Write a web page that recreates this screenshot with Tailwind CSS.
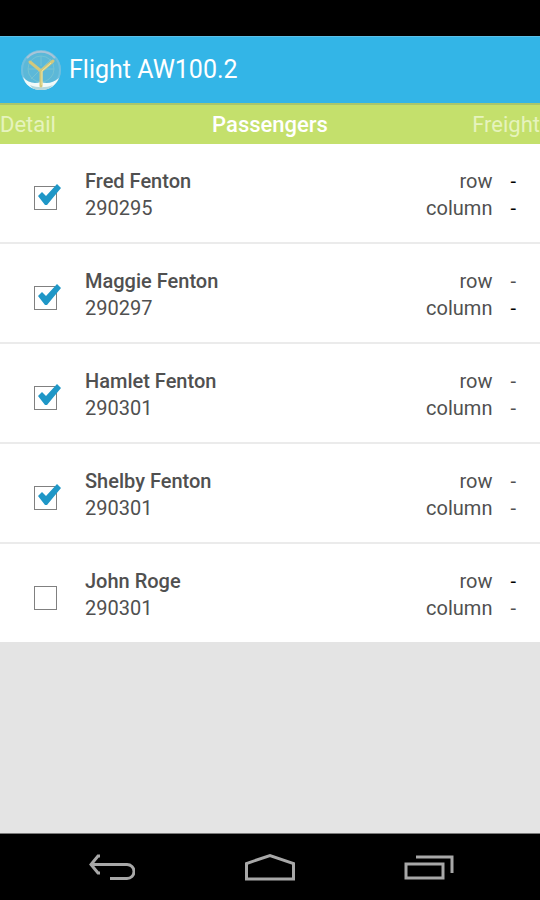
<!DOCTYPE html>
<html lang="en">
<head>
  <meta charset="UTF-8">
  <title>Flight AW100.2</title>
  <meta name="viewport" content="width=device-width, initial-scale=1">
  <script src="https://cdn.jsdelivr.net/npm/@tailwindcss/browser@4"></script>
</head>
<body class="min-h-screen flex flex-col bg-[#e4e4e4] font-['Roboto',sans-serif] text-[#505050]">

  <!-- Status bar -->
  <div class="h-9 bg-black"></div>

  <!-- Action bar -->
  <header class="h-[67px] flex items-center gap-2 px-[21px] bg-[#33b5e7] border-t border-[#5bc0e8]">
    <svg class="w-10 h-11" viewBox="0 0 40 44" fill="none">
      <circle cx="20" cy="22" r="20" fill="#5cb8d8"/>
      <circle cx="20" cy="22" r="19" stroke="#6fbfdf" stroke-width="2"/>
      <path d="M6 10a19 19 0 0 1 28 0" stroke="#a9c4d8" stroke-width="2"/>
      <circle cx="20" cy="21" r="13" stroke="#74c3d4" stroke-width="1"/>
      <path d="M10 31 30 11M20 8v10M7 21h26" stroke="#74c3d4" stroke-width="1"/>
      <path d="M2 29c5 6 11 7 18 5 6 2 12 1 18-4-3 7-9 12-18 12S4 37 2 29z" fill="#f2fafa"/>
      <path d="M9 37c7 3 16 3 23 0-3 4-7 5-12 5s-9-1-11-5z" fill="#b5d8dc"/>
      <path d="M20 38V23L9 14M20 23l12-10" stroke="#d2c87c" stroke-width="3" stroke-linecap="round"/>
      <path d="M21 37V23l9-8" stroke="#efe6a0" stroke-width="1"/>
    </svg>
    <h1 class="text-[25px] leading-8 text-white">Flight AW100.2</h1>
  </header>

  <!-- Tabs -->
  <nav class="h-[41px] grid grid-cols-3 items-center pt-px bg-[#c4e06c] border-t-2 border-[#a9c66c] text-[22px] leading-7">
    <a href="#" class="text-[#e6f3bd]">Detail</a>
    <a href="#" class="text-center font-medium text-white">Passengers</a>
    <a href="#" class="text-right text-[#e6f3bd]">Freight</a>
  </nav>

  <main class="flex-1">
    <ul class="bg-white divide-y-2 divide-[#ebebeb] text-xl leading-[27px]">
      <li class="flex pt-6 pb-5 pl-[34px] pr-6">
        <div class="relative w-6 h-6 mt-[18px] mr-[27px]">
          <input type="checkbox" id="p1" checked class="peer block appearance-none w-[23px] h-6 border border-[#808080]">
          <svg class="absolute -top-1 left-0 hidden peer-checked:block pointer-events-none" width="30" height="26" viewBox="0 0 30 26"><path d="M4 14l4-4 4 4L23 2l4 4-14 17h-2z" fill="#1f97c7"/></svg>
        </div>
        <label for="p1" class="flex-1"><span class="block font-medium">Fred Fenton</span><span class="block">290295</span></label>
        <dl class="grid grid-cols-[auto_auto] gap-x-[18px] text-right">
          <dt>row</dt><dd class="text-black">-</dd>
          <dt>column</dt><dd class="text-black">-</dd>
        </dl>
      </li>
      <li class="flex pt-6 pb-5 pl-[34px] pr-6">
        <div class="relative w-6 h-6 mt-[18px] mr-[27px]">
          <input type="checkbox" id="p2" checked class="peer block appearance-none w-[23px] h-6 border border-[#808080]">
          <svg class="absolute -top-1 left-0 hidden peer-checked:block pointer-events-none" width="30" height="26" viewBox="0 0 30 26"><path d="M4 14l4-4 4 4L23 2l4 4-14 17h-2z" fill="#1f97c7"/></svg>
        </div>
        <label for="p2" class="flex-1"><span class="block font-medium">Maggie Fenton</span><span class="block">290297</span></label>
        <dl class="grid grid-cols-[auto_auto] gap-x-[18px] text-right">
          <dt>row</dt><dd>-</dd>
          <dt>column</dt><dd class="text-black">-</dd>
        </dl>
      </li>
      <li class="flex pt-6 pb-5 pl-[34px] pr-6">
        <div class="relative w-6 h-6 mt-[18px] mr-[27px]">
          <input type="checkbox" id="p3" checked class="peer block appearance-none w-[23px] h-6 border border-[#808080]">
          <svg class="absolute -top-1 left-0 hidden peer-checked:block pointer-events-none" width="30" height="26" viewBox="0 0 30 26"><path d="M4 14l4-4 4 4L23 2l4 4-14 17h-2z" fill="#1f97c7"/></svg>
        </div>
        <label for="p3" class="flex-1"><span class="block font-medium">Hamlet Fenton</span><span class="block">290301</span></label>
        <dl class="grid grid-cols-[auto_auto] gap-x-[18px] text-right">
          <dt>row</dt><dd>-</dd>
          <dt>column</dt><dd>-</dd>
        </dl>
      </li>
      <li class="flex pt-6 pb-5 pl-[34px] pr-6">
        <div class="relative w-6 h-6 mt-[18px] mr-[27px]">
          <input type="checkbox" id="p4" checked class="peer block appearance-none w-[23px] h-6 border border-[#808080]">
          <svg class="absolute -top-1 left-0 hidden peer-checked:block pointer-events-none" width="30" height="26" viewBox="0 0 30 26"><path d="M4 14l4-4 4 4L23 2l4 4-14 17h-2z" fill="#1f97c7"/></svg>
        </div>
        <label for="p4" class="flex-1"><span class="block font-medium">Shelby Fenton</span><span class="block">290301</span></label>
        <dl class="grid grid-cols-[auto_auto] gap-x-[18px] text-right">
          <dt>row</dt><dd>-</dd>
          <dt>column</dt><dd>-</dd>
        </dl>
      </li>
      <li class="flex pt-6 pb-5 pl-[34px] pr-6">
        <div class="relative w-6 h-6 mt-[18px] mr-[27px]">
          <input type="checkbox" id="p5" class="peer block appearance-none w-[23px] h-6 border border-[#808080]">
          <svg class="absolute -top-1 left-0 hidden peer-checked:block pointer-events-none" width="30" height="26" viewBox="0 0 30 26"><path d="M4 14l4-4 4 4L23 2l4 4-14 17h-2z" fill="#1f97c7"/></svg>
        </div>
        <label for="p5" class="flex-1"><span class="block font-medium">John Roge</span><span class="block">290301</span></label>
        <dl class="grid grid-cols-[auto_auto] gap-x-[18px] text-right">
          <dt>row</dt><dd class="text-black">-</dd>
          <dt>column</dt><dd>-</dd>
        </dl>
      </li>
    </ul>
  </main>

  <!-- System navigation -->
  <footer class="h-[67px] flex items-center px-8 pt-0.5 bg-black border-t border-[#7a7a7a]">
    <button type="button" aria-label="Back" class="flex-1 flex justify-center">
      <svg width="48" height="30" viewBox="0 0 48 30" fill="none" stroke="#a8a8a8" stroke-width="3"><path d="M13 3h-2l-7 8.500 7 8.500h2M4 11.500h36a7 7 0 0 1 0 14H23"/></svg>
    </button>
    <button type="button" aria-label="Home" class="flex-1 flex justify-center">
      <svg width="52" height="30" viewBox="0 0 52 30" fill="none" stroke="#a8a8a8" stroke-width="3"><path d="M2.500 26V10.500L26 2.500l23.500 8V26z"/></svg>
    </button>
    <button type="button" aria-label="Recent apps" class="flex-1 flex justify-center">
      <svg width="50" height="30" viewBox="0 0 50 30" fill="none" stroke="#a8a8a8" stroke-width="3"><path d="M2 11h37v14H2zM12 4h36v16"/></svg>
    </button>
  </footer>

</body>
</html>
